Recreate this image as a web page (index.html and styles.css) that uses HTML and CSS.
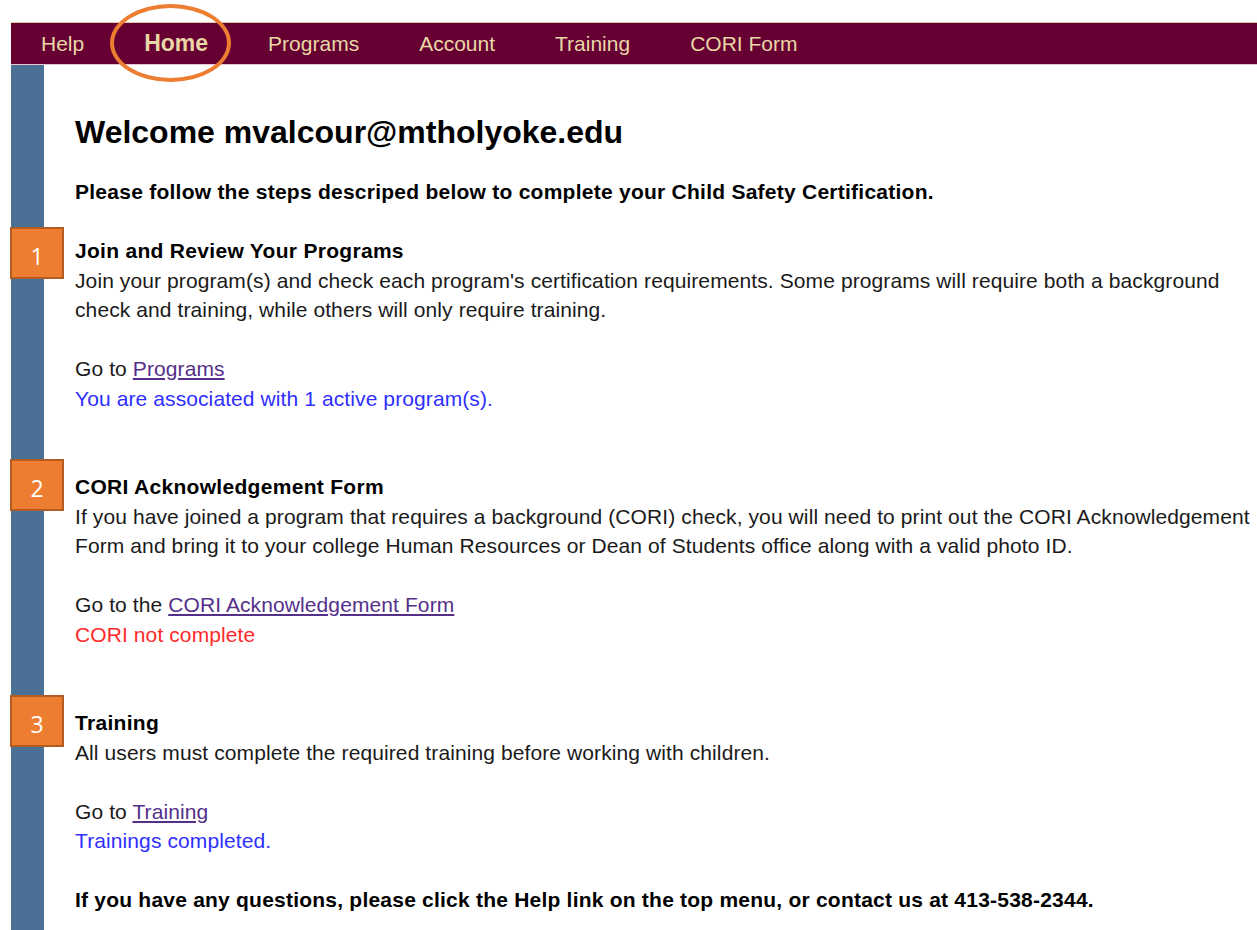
FILE: index.html
```html
<!DOCTYPE html>
<html lang="en">
<head>
<meta charset="utf-8">
<title>Child Safety Certification - Home</title>
<link rel="stylesheet" href="styles.css">
</head>
<body>
<div class="page">
  <nav class="topnav">
    <a class="nav-item" href="#">Help</a>
    <a class="nav-item nav-home" href="#">Home</a>
    <a class="nav-item" href="#">Programs</a>
    <a class="nav-item" href="#">Account</a>
    <a class="nav-item" href="#">Training</a>
    <a class="nav-item" href="#">CORI Form</a>
  </nav>
  <div class="layout">
    <aside class="sidebar"></aside>
    <main class="content">
      <h1 class="welcome">Welcome mvalcour@mtholyoke.edu</h1>
      <p class="intro">Please follow the steps descriped below to complete your Child Safety Certification.</p>

      <section class="step step-first">
        <span class="badge badge-1">1</span>
        <h2 class="step-title">Join and Review Your Programs</h2>
        <p class="step-text">Join your program(s) and check each program's certification requirements. Some programs will require both a background check and training, while others will only require training.</p>
        <p class="goto">Go to <a href="#" class="link">Programs</a></p>
        <p class="status status-info">You are associated with 1 active program(s).</p>
      </section>

      <section class="step">
        <span class="badge">2</span>
        <h2 class="step-title">CORI Acknowledgement Form</h2>
        <p class="step-text">If you have joined a program that requires a background (CORI) check, you will need to print out the CORI Acknowledgement Form and bring it to your college Human Resources or Dean of Students office along with a valid photo ID.</p>
        <p class="goto">Go to the <a href="#" class="link">CORI Acknowledgement Form</a></p>
        <p class="status status-alert">CORI not complete</p>
      </section>

      <section class="step step-last">
        <span class="badge">3</span>
        <h2 class="step-title">Training</h2>
        <p class="step-text">All users must complete the required training before working with children.</p>
        <p class="goto">Go to <a href="#" class="link">Training</a></p>
        <p class="status status-info">Trainings completed.</p>
      </section>

      <p class="contact">If you have any questions, please click the Help link on the top menu, or contact us at 413-538-2344.</p>
    </main>
  </div>
</div>
</body>
</html>
```

FILE: styles.css
```css
html, body {
  margin: 0;
  padding: 0;
  background: #ffffff;
}

body {
  font-family: "Liberation Sans", Arial, sans-serif;
  color: #111111;
  overflow: hidden;
}

.page {
  padding-top: 22px;
  min-height: 908px;
}

/* top menu bar */
.topnav {
  margin-left: 11px;
  height: 41px;
  background: #660033;
  border-top: 1px solid #d9c9a3;
  border-bottom: 1px solid #e6c6d2;
  display: flex;
  align-items: center;
}

.nav-item {
  position: relative;
  padding: 0 30px;
  font-size: 21px;
  line-height: 41px;
  color: #e9d7a6;
  text-decoration: none;
  white-space: nowrap;
}

.nav-home {
  font-size: 23px;
  font-weight: bold;
}

/* highlight ring around the current page */
.nav-home::after {
  content: "";
  position: absolute;
  left: -4px;
  top: -19px;
  width: 113px;
  height: 70px;
  border: 4px solid #ed7d31;
  border-radius: 50%;
}

/* body: blue rail + content */
.layout {
  display: flex;
  margin-left: 11px;
  min-height: 866px;
}

.sidebar {
  flex: 0 0 33px;
  background: #4a7096;
}

.content {
  flex: 1;
  padding: 49px 0 0 31px;
  font-size: 21px;
  line-height: 29.5px;
  letter-spacing: 0.1px;
}

.content p {
  margin: 0;
}

.welcome {
  margin: 0 0 26px;
  font-size: 32px;
  line-height: 37px;
  font-weight: bold;
  letter-spacing: 0;
  color: #000;
}

.intro {
  font-weight: bold;
  letter-spacing: 0.25px;
  color: #000;
  margin-bottom: 29.5px !important;
}

.step {
  position: relative;
  margin-bottom: 59px;
}

.step-last {
  margin-bottom: 29.5px;
}

.step-title {
  margin: 0;
  font-size: 21px;
  line-height: 29.5px;
  font-weight: bold;
  letter-spacing: 0.3px;
  color: #000;
}

.step-text {
  color: #1a1a1a;
}

.goto {
  margin-top: 29.5px !important;
  color: #1a1a1a;
}

.link {
  color: #55308a;
  text-decoration: underline;
}

.status-info {
  color: #2f2fff;
}

.status-alert {
  color: #ff2a2a;
}

.contact {
  font-weight: bold;
  letter-spacing: 0.22px;
  color: #000;
}

/* numbered step markers */
.badge {
  position: absolute;
  left: -65px;
  top: -13px;
  width: 50px;
  height: 48px;
  box-sizing: content-box;
  background: #ed7d31;
  border: 2px solid #b35d22;
  color: #ffffff;
  font-family: "Open Sans", "Noto Sans", sans-serif;
  font-size: 23px;
  line-height: 54px;
  letter-spacing: 0;
  text-align: center;
}

.badge-1 {
  top: -9px;
}
```
